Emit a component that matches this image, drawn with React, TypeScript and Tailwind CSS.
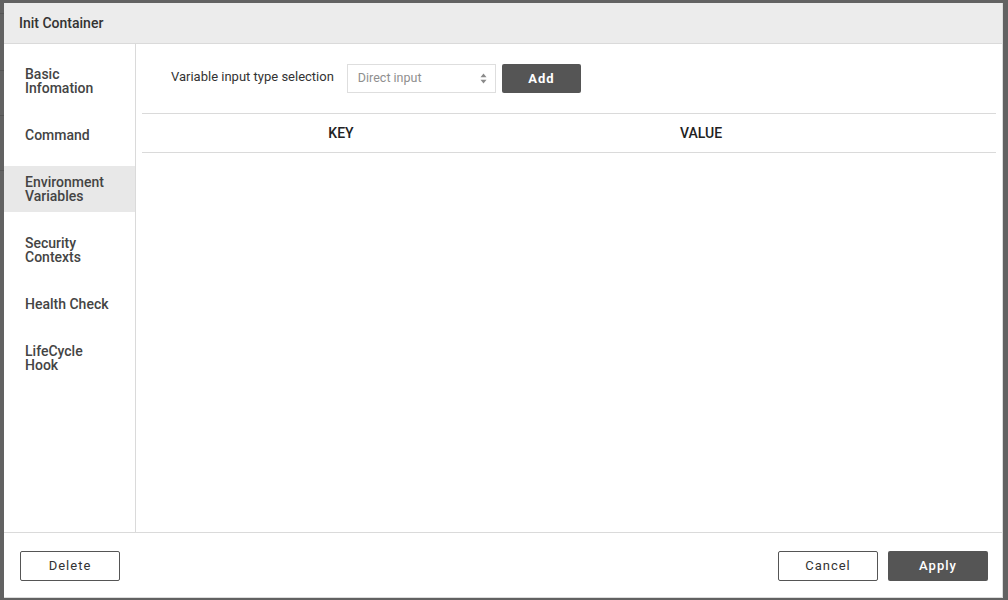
import { useState } from "react";

const MENU: { id: string; lines: string[] }[] = [
  { id: "basic", lines: ["Basic", "Infomation"] },
  { id: "command", lines: ["Command"] },
  { id: "env", lines: ["Environment", "Variables"] },
  { id: "security", lines: ["Security", "Contexts"] },
  { id: "health", lines: ["Health Check"] },
  { id: "lifecycle", lines: ["LifeCycle", "Hook"] },
];

function SortArrows() {
  return (
    <svg width="7" height="11" viewBox="0 0 7 11" aria-hidden>
      <path d="M3.5 0.5 L6.5 4.3 H0.5 Z" fill="#8a8a8a" />
      <path d="M3.5 10.5 L6.5 6.7 H0.5 Z" fill="#8a8a8a" />
    </svg>
  );
}

export default function App() {
  const [active, setActive] = useState("env");

  return (
    <div
      className="relative h-[600px] w-[1008px] overflow-hidden bg-[#626262] pb-[2px] pl-[4px] pr-[5px] pt-[3px]"
      style={{ fontFamily: "Roboto, 'Liberation Sans', sans-serif" }}
    >
      {/* page behind the modal */}
      <div aria-hidden className="absolute left-0 top-0 h-full w-[4px]">
        <div className="mt-[13px] h-px bg-[#555]" />
        <div className="mt-[56px] h-px bg-[#555]" />
        <div className="mt-[44px] h-px bg-[#555]" />
        <div className="mt-[54px] h-px bg-[#555]" />
      </div>

      {/* Modal */}
      <div className="relative flex h-full flex-col border-b border-r border-[#dcdcdc] bg-white">
        {/* Header */}
        <div className="flex h-[41px] shrink-0 items-center border-b border-[#dadada] bg-[#ececec] pl-[15px] pt-[1px] text-[14px] font-medium text-[#333]">
          Init Container
        </div>

        {/* Body */}
        <div className="flex min-h-0 flex-1 border-b border-[#dadada]">
          {/* Sidebar */}
          <nav className="flex w-[132px] shrink-0 flex-col gap-[15px] border-r border-[#dadada] pt-[14px]">
            {MENU.map((item) => (
              <button
                key={item.id}
                onClick={() => setActive(item.id)}
                className={`flex flex-col items-start px-[21px] py-[9px] text-left text-[14px] font-medium leading-[14px] text-[#444] ${
                  active === item.id ? "bg-[#e8e8e8]" : ""
                }`}
              >
                {item.lines.map((l) => (
                  <span key={l}>{l}</span>
                ))}
              </button>
            ))}
          </nav>

          {/* Content */}
          <div className="flex min-w-0 flex-1 flex-col px-[6px] pt-[20px]">
            <div className="flex items-center pl-[29px]">
              <span className="pb-[3px] text-[13px] text-[#333]">Variable input type selection</span>
              <div className="ml-[13px] flex h-[29px] w-[149px] items-center justify-between border border-[#dedede] pl-[10px] pr-[8px] text-[12.5px] text-[#8f8f8f]">
                <span>Direct input</span>
                <SortArrows />
              </div>
              <button className="ml-[6px] h-[29px] w-[79px] rounded-[2px] bg-[#555] text-[13px] font-bold tracking-[1px] text-white">
                Add
              </button>
            </div>

            {/* Table header */}
            <div className="mt-[20px] grid h-[40px] grid-cols-[398px_322px_1fr] items-center border-y border-[#dadada] text-[14px] font-medium text-[#222]">
              <div className="text-center">KEY</div>
              <div className="text-center">VALUE</div>
              <div />
            </div>
          </div>
        </div>

        {/* Footer */}
        <div className="flex h-[64px] shrink-0 items-start justify-between pl-[16px] pr-[14px] pt-[18px]">
          <button className="h-[30px] w-[100px] rounded-[2px] border border-[#555] text-[13px] tracking-[1px] text-[#333]">
            Delete
          </button>
          <div className="flex gap-[10px]">
            <button className="h-[30px] w-[100px] rounded-[2px] border border-[#555] text-[13px] tracking-[1px] text-[#333]">
              Cancel
            </button>
            <button className="h-[30px] w-[100px] rounded-[2px] bg-[#555] text-[13px] font-medium tracking-[1px] text-white">
              Apply
            </button>
          </div>
        </div>
      </div>
    </div>
  );
}
